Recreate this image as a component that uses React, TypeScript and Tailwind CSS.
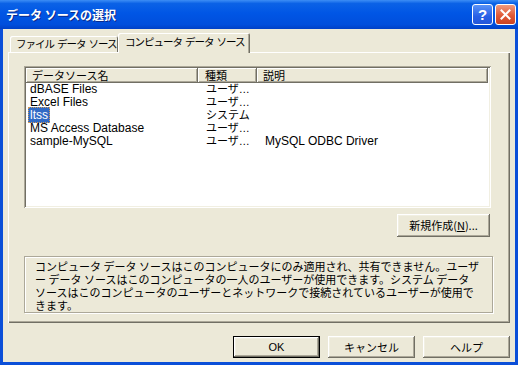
import type { ReactNode } from 'react';

const bevel =
  'shadow-[inset_-1px_-1px_0_#716F64,inset_1px_1px_0_#FFFFFF,inset_-2px_-2px_0_#ACA899,inset_2px_2px_0_#F1EFE2]';

const rows = [
  { name: 'dBASE Files', type: 'ユーザ…', desc: '' },
  { name: 'Excel Files', type: 'ユーザ…', desc: '' },
  { name: 'ltss', type: 'システム', desc: '', selected: true },
  { name: 'MS Access Database', type: 'ユーザ…', desc: '' },
  { name: 'sample-MySQL', type: 'ユーザ…', desc: 'MySQL ODBC Driver' },
];

const Button = ({ children, isDefault }: { children: ReactNode; isDefault?: boolean }) => {
  if (isDefault) {
    return (
      <div className="h-[22px] w-[87px] border border-black">
        <div className={`flex h-full items-center justify-center text-[11px] ${bevel}`}>{children}</div>
      </div>
    );
  }
  return (
    <div className={`flex h-[22px] w-[87px] items-center justify-center text-[11px] ${bevel}`}>{children}</div>
  );
};

const HeaderCell = ({ children, className }: { children: ReactNode; className: string }) => (
  <div
    className={`flex h-[15px] items-center text-[11px] leading-none shadow-[inset_-1px_-1px_0_#716F64,inset_1px_1px_0_#FFFFFF,inset_-2px_-2px_0_#ACA899] ${className}`}
  >
    {children}
  </div>
);

const TabLabel = ({ words }: { words: string[] }) => (
  <div className="flex gap-[3px]">
    {words.map((w) => (
      <span key={w}>{w}</span>
    ))}
  </div>
);

export default function App() {
  return (
    <div className="flex h-[365px] w-[518px] flex-col bg-[#0B4FD8] font-['Liberation_Sans','Noto_Sans_CJK_JP',sans-serif] text-[12px] text-black">
      {/* title bar */}
      <div className="flex h-[29px] items-center justify-between bg-[linear-gradient(to_bottom,#3D8EF5_0%,#0B62E6_12%,#0056E5_45%,#004EDC_85%,#0040C6_100%)] pl-[6px] pr-[2px]">
        <span className="font-['Noto_Sans_CJK_JP',sans-serif] text-[12px] font-bold text-white [text-shadow:1px_1px_0_#0A2A8C]">
          データ ソースの選択
        </span>
        <div className="flex gap-[2px]">
          <div className="flex h-[21px] w-[21px] items-center justify-center rounded-[3px] border border-white bg-[linear-gradient(to_bottom,#5A93F7,#2860E6_60%,#2457D9)] text-[15px] font-bold leading-none text-white">
            ?
          </div>
          <div className="flex h-[21px] w-[21px] items-center justify-center rounded-[3px] border border-white bg-[linear-gradient(to_bottom,#F09A7E,#E05A38_55%,#CC4322)]">
            <svg width="11" height="11" viewBox="0 0 11 11">
              <path d="M1.5 1.5 L9.5 9.5 M9.5 1.5 L1.5 9.5" stroke="white" strokeWidth="2" strokeLinecap="square" />
            </svg>
          </div>
        </div>
      </div>

      {/* body */}
      <div className="mx-[3px] mb-[3px] flex flex-1 flex-col bg-[#ECE9D8] px-[5px] pt-[4px]">
        {/* tabs */}
        <div className="relative z-10 -mb-px flex h-[20px] items-end pl-[2px] font-['Noto_Sans_CJK_JP',sans-serif] text-[10.5px] leading-none tracking-[-1px] whitespace-nowrap">
          <div className="mb-[1px] flex h-[16px] w-[108px] items-center rounded-t-[2px] bg-[#ECE9D8] pl-[6px] shadow-[inset_1px_1px_0_#FFFFFF,inset_-1px_0_0_#716F64]">
            <TabLabel words={['ファイル', 'データ', 'ソース']} />
          </div>
          <div className="flex h-[20px] w-[132px] items-center rounded-t-[2px] bg-[#ECE9D8] pb-[1px] pl-[7px] shadow-[inset_1px_1px_0_#FFFFFF,inset_-1px_0_0_#716F64,inset_-2px_0_0_#ACA899]">
            <TabLabel words={['コンピュータ', 'データ', 'ソース']} />
          </div>
        </div>

        {/* panel */}
        <div className="flex h-[271px] flex-col pl-[16px] pt-[14px] shadow-[inset_1px_1px_0_#FFFFFF,inset_-1px_-1px_0_#716F64,inset_-2px_-2px_0_#ACA899]">
          {/* list */}
          <div className="h-[142px] w-[467px] bg-white p-[2px] shadow-[inset_1px_1px_0_#ACA899,inset_-1px_-1px_0_#FFFFFF,inset_2px_2px_0_#716F64,inset_-2px_-2px_0_#F1EFE2]">
            <div className="flex bg-white">
              <HeaderCell className="w-[172px] bg-[#ECE9D8] pl-[6px] font-['Noto_Sans_CJK_JP',sans-serif]">データソース名</HeaderCell>
              <HeaderCell className="w-[59px] bg-[#ECE9D8] pl-[7px] font-['Noto_Sans_CJK_JP',sans-serif]">種類</HeaderCell>
              <HeaderCell className="w-[231px] bg-[#ECE9D8] pl-[6px] font-['Noto_Sans_CJK_JP',sans-serif]">説明</HeaderCell>
            </div>
            {rows.map((row) => (
              <div key={row.name} className="flex h-[13px] items-center leading-[13px]">
                <div className="w-[172px] pl-[2px]">
                  <span
                    className={
                      row.selected
                        ? 'border border-dotted border-[#CE9A5B] bg-[#316AC5] px-[1px] text-white'
                        : 'px-[2px]'
                    }
                  >
                    {row.name}
                  </span>
                </div>
                <div className="w-[59px] pl-[8px] text-[11px]">{row.type}</div>
                <div className="w-[231px] pl-[8px]">{row.desc}</div>
              </div>
            ))}
          </div>

          {/* new button */}
          <div className="mt-[6px] flex w-[467px] justify-end pr-[1px]">
            <div className={`flex h-[23px] w-[93px] items-center justify-center font-['Noto_Sans_CJK_JP',sans-serif] text-[11px] ${bevel}`}>
              新規作成(<span className="underline">N</span>)...
            </div>
          </div>

          {/* description */}
          <div className="mt-[19px] h-[57px] w-[469px] border border-[#ACA899] pl-[10px] pt-[3px] font-['Noto_Sans_CJK_JP',sans-serif] text-[11px] leading-[13px] whitespace-nowrap shadow-[inset_1px_1px_0_#FFFFFF,1px_1px_0_#FFFFFF]">
            <p className="h-[13px]">コンピュータ データ ソースはこのコンピュータにのみ適用され、共有できません。ユーザ</p>
            <p className="h-[13px]">ー データ ソースはこのコンピュータの一人のユーザーが使用できます。システム データ</p>
            <p className="h-[13px]">ソースはこのコンピュータのユーザーとネットワークで接続されているユーザーが使用で</p>
            <p className="h-[13px]">きます。</p>
          </div>
        </div>

        {/* dialog buttons */}
        <div className="mt-[13px] flex justify-end gap-[8px]">
          <Button isDefault>OK</Button>
          <Button>
            <span className="font-['Noto_Sans_CJK_JP',sans-serif]">キャンセル</span>
          </Button>
          <Button>
            <span className="font-['Noto_Sans_CJK_JP',sans-serif]">ヘルプ</span>
          </Button>
        </div>
      </div>
    </div>
  );
}
